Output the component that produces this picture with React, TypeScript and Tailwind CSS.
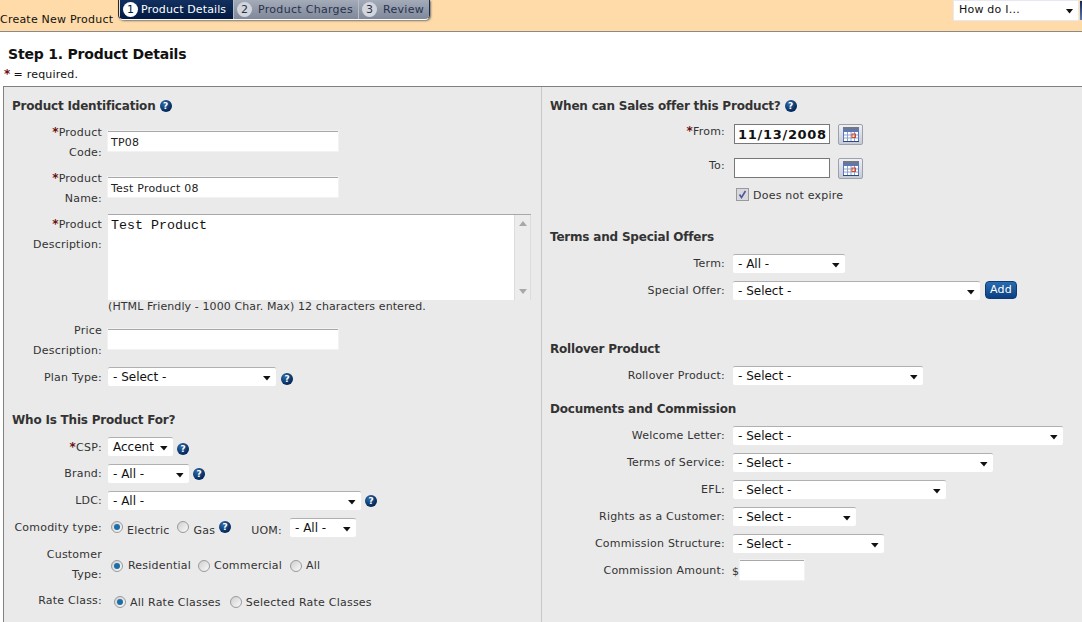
import React from 'react';

const sans = "font-['DejaVu_Sans',Verdana,sans-serif]";

function Help({ className = '' }: { className?: string }) {
  return (
    <span className={`inline-flex h-[12px] w-[12px] shrink-0 items-center justify-center rounded-full bg-[radial-gradient(circle_at_35%_30%,#2f6aa8,#04295c_70%)] text-[9px] leading-none font-bold tracking-normal text-white ${className}`}>
      ?
    </span>
  );
}

function Req() {
  return <span className="text-[12px] leading-none font-bold text-[#6b1010]">*</span>;
}

function Select({ value = '- Select -', className = '' }: { value?: string; className?: string }) {
  return (
    <div className={`flex h-[19px] shrink-0 items-center justify-between rounded-[2px] border-t border-t-[#b0b0b0] bg-white pr-[3px] pl-[5px] text-[12px] leading-none tracking-normal text-[#111] ${className}`}>
      <span>{value}</span>
      <svg width="9" height="5" viewBox="0 0 9 5" className="mt-[2px] mr-[1px]">
        <path d="M0 0h7.5L4 4.5z" fill="#111" />
      </svg>
    </div>
  );
}

function TextBox({ value = '', className = '' }: { value?: string; className?: string }) {
  return (
    <div className={`h-[20px] shrink-0 border-t border-t-[#a8a8a8] bg-white pt-px pl-[3px] text-[11px] leading-[20px] text-[#222] shadow-[0_0_0_1px_#f2f2f2] ${className}`}>
      {value}
    </div>
  );
}

function Radio({ on = false }: { on?: boolean }) {
  return (
    <span className="relative block h-[12px] w-[12px] shrink-0 rounded-full border border-[#9a9a9a] bg-[linear-gradient(135deg,#cfcfcf,#fafafa)]">
      {on && <span className="absolute top-[2px] left-[2px] h-[6px] w-[6px] rounded-full bg-[#1c6ea8]" />}
    </span>
  );
}

function Label({ children, w = 'w-[98px]', lh = 'leading-[20px]' }: { children: React.ReactNode; w?: string; lh?: string }) {
  return <div className={`-mb-px shrink-0 pt-px text-right text-[#333] ${lh} ${w}`}>{children}</div>;
}

function Calendar() {
  return (
    <div className="ml-[8px] flex h-[21px] w-[25px] shrink-0 items-center justify-center rounded-[2px] border border-[#9aa0ac] bg-[linear-gradient(#eef0f5,#c6cad6)]">
      <svg width="16" height="15" viewBox="0 0 16 15">
        <rect x="0" y="2" width="16" height="13" fill="#5a78b8" />
        <rect x="0" y="0" width="16" height="2" fill="#777" />
        <rect x="1" y="5" width="14" height="9" fill="#fff" />
        <path d="M4.5 5v9M8 5v9M11.5 5v9M1 8h14M1 11h14" stroke="#8ea3cf" strokeWidth="1" />
        <rect x="9" y="7" width="3.5" height="3.5" fill="none" stroke="#e0401a" strokeWidth="1" />
        <rect x="0" y="14" width="16" height="1" fill="#2d4a80" />
      </svg>
    </div>
  );
}

function Step({ n, text, active = false, className = '' }: { n: number; text: string; active?: boolean; className?: string }) {
  return (
    <div className={`flex h-full items-center pl-[3px] ${active ? 'bg-[linear-gradient(#12305f,#001a42)] tracking-[0.12px] text-white' : 'border-l border-l-[#b8bdc8] bg-[linear-gradient(#a4abb9,#7f8899)] tracking-[0.3px] text-[#27324d]'} ${className}`}>
      <span className={`flex h-[15px] w-[15px] items-center justify-center rounded-full text-[11px] leading-none tracking-normal ${active ? 'mr-[3px] bg-white text-[#001a42]' : 'mr-[6px] bg-[#d2d5dc] text-[#27324d]'}`}>{n}</span>
      <span className="pt-px whitespace-nowrap">{text}</span>
    </div>
  );
}

function SectionTitle({ children, className = '' }: { children: React.ReactNode; className?: string }) {
  return <div className={`flex items-center text-[12px] leading-[16px] font-bold tracking-[-0.2px] text-[#333] ${className}`}>{children}</div>;
}

export default function App() {
  return (
    <div className={`h-[622px] w-[1082px] overflow-hidden bg-white text-[11px] tracking-[0.22px] ${sans}`}>
      {/* top bar */}
      <div className="flex h-[32px] border-b border-b-[#8a8a8a] bg-[#fedba8]">
        <div className="mt-[13px] w-[118px] shrink-0 leading-[14px] whitespace-nowrap text-[#111]">Create New Product</div>
        <div className="flex h-[20px] w-[312px] overflow-hidden rounded-b-[5px] border-x border-b border-x-[#1a2a4a] border-b-white pl-px shadow-[1px_1px_2px_#777]">
          <Step n={1} text="Product Details" active className="w-[113px]" />
          <Step n={2} text="Product Charges" className="w-[125px]" />
          <Step n={3} text="Review" className="flex-1" />
        </div>
        <div className="mt-px ml-[524px] flex h-[19px] w-[124px] items-center justify-between bg-white pr-[4px] pl-[5px] text-[#111] shadow-[0_0_0_1px_#e8e8f0]">
          <span>How do I...</span>
          <svg width="8" height="5" viewBox="0 0 8 5" className="mt-[2px]"><path d="M0 0h7L3.5 4.5z" fill="#111" /></svg>
        </div>
        <div className="mt-px ml-[2px] h-[19px] flex-1 bg-[linear-gradient(#0c2a58,#5a7aa8)]" />
      </div>

      <div className="mt-[14px] ml-[8px] text-[14px] leading-[17px] font-bold tracking-[-0.2px] text-[#111]">Step 1. Product Details</div>
      <div className="mt-[5px] ml-[4px] leading-[14px] text-[#111]"><Req /><span className="ml-[3px]">= required.</span></div>

      {/* form panel */}
      <div className="mt-[4px] ml-[3px] flex h-[536px] border-t border-l border-[#808080] bg-[#eaeaea]">
        {/* left column */}
        <div className="w-[538px] shrink-0 border-r border-r-[#c8c8c8]">
          <SectionTitle className="mt-[11px] ml-[8px]">Product Identification<Help className="ml-[4px]" /></SectionTitle>

          <div className="mt-[8px] flex">
            <Label><Req />Product<br />Code:</Label>
            <TextBox value="TP08" className="mt-[9px] ml-[6px] w-[230px]" />
          </div>
          <div className="mt-[6px] flex">
            <Label><Req />Product<br />Name:</Label>
            <TextBox value="Test Product 08" className="mt-[9px] ml-[6px] w-[230px]" />
          </div>
          <div className="mt-[6px] flex">
            <Label><Req />Product<br />Description:</Label>
            <div className="ml-[6px] flex h-[86px] w-[423px] border-t border-t-[#a8a8a8] bg-white">
              <div className="flex-1 pt-[3px] pl-[3px] font-['Liberation_Mono',monospace] text-[13.33px] leading-[15px] tracking-normal text-[#111]">Test Product</div>
              <div className="flex w-[17px] flex-col items-center justify-between border-x border-x-[#dcdcdc] bg-[#ececec] py-[6px]">
                <svg width="8" height="5" viewBox="0 0 8 5"><path d="M4 0l4 5H0z" fill="#a8a8a8" /></svg>
                <svg width="8" height="5" viewBox="0 0 8 5"><path d="M0 0h8L4 5z" fill="#a8a8a8" /></svg>
              </div>
            </div>
          </div>
          <div className="ml-[104px] leading-[14px] tracking-[0.1px] whitespace-nowrap text-[#333]">(HTML Friendly - 1000 Char. Max) 12 characters entered.</div>
          <div className="mt-[6px] flex">
            <Label>Price<br />Description:</Label>
            <TextBox className="mt-[9px] ml-[6px] w-[230px]" />
          </div>
          <div className="mt-[7px] flex items-start">
            <Label>Plan Type:</Label>
            <Select className="ml-[6px] w-[168px]" />
            <Help className="mt-[6px] ml-[5px]" />
          </div>

          <SectionTitle className="mt-[25px] ml-[8px]">Who Is This Product For?</SectionTitle>

          <div className="mt-[9px] flex items-start">
            <Label><Req />CSP:</Label>
            <Select value="Accent" className="ml-[6px] w-[65px]" />
            <Help className="mt-[6px] ml-[4px]" />
          </div>
          <div className="mt-[6px] flex items-start">
            <Label>Brand:</Label>
            <Select value="- All -" className="mt-px ml-[6px] w-[81px]" />
            <Help className="mt-[5px] ml-[4px]" />
          </div>
          <div className="mt-[7px] flex items-start">
            <Label>LDC:</Label>
            <Select value="- All -" className="mt-px ml-[6px] w-[253px]" />
            <Help className="mt-[5px] ml-[4px]" />
          </div>
          <div className="mt-[7px] flex items-start">
            <Label>Comodity type:</Label>
            <div className="mt-[3px] ml-[9px] flex h-[14px] items-center">
              <Radio on />
              <span className="mt-[8px] ml-[4px] text-[#333]">Electric</span>
              <span className="ml-[7px]"><Radio /></span>
              <span className="mt-[8px] ml-[5px] text-[#333]">Gas</span>
              <Help className="ml-[4px]" />
              <span className="mt-[8px] ml-[20px] text-[#333]">UOM:</span>
            </div>
            <Select value="- All -" className="mt-px ml-[8px] w-[66px]" />
          </div>
          <div className="mt-[7px] flex items-center">
            <Label>Customer<br />Type:</Label>
            <div className="ml-[9px] flex items-center pt-[4px] text-[#333]">
              <Radio on />
              <span className="ml-[5px]">Residential</span>
              <span className="ml-[7px]"><Radio /></span>
              <span className="ml-[4px]">Commercial</span>
              <span className="ml-[8px]"><Radio /></span>
              <span className="ml-[4px]">All</span>
            </div>
          </div>
          <div className="mt-[6px] flex items-start">
            <Label>Rate Class:</Label>
            <div className="mt-[5px] ml-[12px] flex h-[14px] items-center text-[#333]">
              <Radio on />
              <span className="mt-[2px] ml-[4px]">All Rate Classes</span>
              <span className="ml-[9px]"><Radio /></span>
              <span className="mt-[2px] ml-[4px]">Selected Rate Classes</span>
            </div>
          </div>
        </div>

        {/* right column */}
        <div className="flex-1">
          <SectionTitle className="mt-[11px] ml-[8px]">When can Sales offer this Product?<Help className="ml-[4px]" /></SectionTitle>

          <div className="mt-[10px] flex items-start">
            <Label w="w-[183px]" lh="leading-[14px]"><Req />From:</Label>
            <div className="ml-[9px] h-[20px] w-[96px] border border-[#777] bg-white pl-[3px] text-[13px] leading-[19px] font-bold tracking-[0.7px] text-[#111]">11/13/2008</div>
            <Calendar />
          </div>
          <div className="mt-[13px] flex items-start">
            <Label w="w-[183px]" lh="leading-[14px]">To:</Label>
            <div className="ml-[9px] h-[20px] w-[96px] border border-[#777] bg-white" />
            <Calendar />
          </div>
          <div className="mt-[9px] ml-[194px] flex h-[13px] items-center text-[#333]">
            <span className="flex h-[13px] w-[13px] items-center justify-center border border-[#9a9a9a] bg-[#d8d8de]">
              <svg width="9" height="9" viewBox="0 0 9 9"><path d="M1.5 4.5L3.5 7.5L7.5 1" fill="none" stroke="#4a5a9a" strokeWidth="1.6" /></svg>
            </span>
            <span className="mt-[4px] ml-[4px]">Does not expire</span>
          </div>

          <SectionTitle className="mt-[28px] ml-[8px]">Terms and Special Offers</SectionTitle>
          <div className="mt-[8px] flex items-start">
            <Label w="w-[183px]">Term:</Label>
            <Select value="- All -" className="mt-px ml-[8px] w-[112px]" />
          </div>
          <div className="mt-[7px] flex items-start">
            <Label w="w-[183px]">Special Offer:</Label>
            <Select className="mt-px ml-[8px] w-[247px]" />
            <div className="mt-px ml-[5px] flex h-[18px] w-[32px] items-center justify-center rounded-[4px] border border-[#0a3a78] bg-[linear-gradient(#2a6cb0,#0a3f80)] text-white">Add</div>
          </div>

          <SectionTitle className="mt-[41px] ml-[8px]">Rollover Product</SectionTitle>
          <div className="mt-[8px] flex items-start">
            <Label w="w-[183px]">Rollover Product:</Label>
            <Select className="mt-px ml-[8px] w-[190px]" />
          </div>

          <SectionTitle className="mt-[16px] ml-[8px]">Documents and Commission</SectionTitle>
          <div className="mt-[8px] flex items-start">
            <Label w="w-[183px]">Welcome Letter:</Label>
            <Select className="mt-px ml-[8px] w-[330px]" />
          </div>
          <div className="mt-[7px] flex items-start">
            <Label w="w-[183px]">Terms of Service:</Label>
            <Select className="mt-px ml-[8px] w-[260px]" />
          </div>
          <div className="mt-[7px] flex items-start">
            <Label w="w-[183px]">EFL:</Label>
            <Select className="mt-px ml-[8px] w-[213px]" />
          </div>
          <div className="mt-[7px] flex items-start">
            <Label w="w-[183px]">Rights as a Customer:</Label>
            <Select className="mt-px ml-[8px] w-[123px]" />
          </div>
          <div className="mt-[7px] flex items-start">
            <Label w="w-[183px]">Commission Structure:</Label>
            <Select className="mt-px ml-[8px] w-[151px]" />
          </div>
          <div className="mt-[7px] flex items-start">
            <Label w="w-[183px]">Commission Amount:</Label>
            <span className="mt-[5px] ml-[7px] w-[8px] leading-[14px] text-[#333]">$</span>
            <TextBox className="w-[64px]" />
          </div>
        </div>
      </div>
    </div>
  );
}
